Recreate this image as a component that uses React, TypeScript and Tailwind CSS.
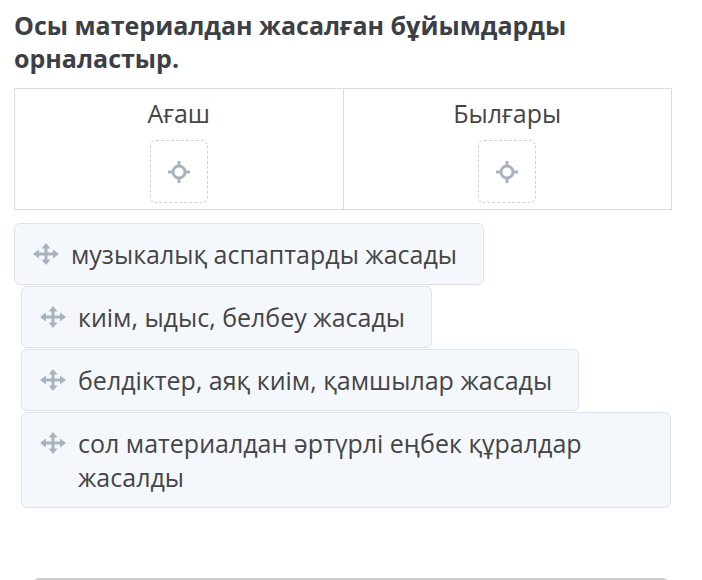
import React from "react";

const MoveIcon = () => (
    <svg width="26" height="22" viewBox="0 0 26 22" className="shrink-0">
        <g fill="#a9b3bd">
            <rect x="11.5" y="4" width="3" height="14" />
            <rect x="5" y="9.5" width="16" height="3" />
            <polygon points="13,0 8.5,5.5 17.5,5.5" />
            <polygon points="13,22 8.5,16.5 17.5,16.5" />
            <polygon points="0,11 6,6.5 6,15.5" />
            <polygon points="26,11 20,6.5 20,15.5" />
        </g>
    </svg>
);

const TargetIcon = () => (
    <svg width="24" height="24" viewBox="0 0 24 24">
        <g stroke="#a9b3bd" fill="none" strokeWidth="3">
            <circle cx="12" cy="12" r="6" />
            <line x1="12" y1="1" x2="12" y2="6" />
            <line x1="12" y1="18" x2="12" y2="23" />
            <line x1="1" y1="12" x2="6" y2="12" />
            <line x1="18" y1="12" x2="23" y2="12" />
        </g>
    </svg>
);

const Column = ({ title, last }: { title: string; last?: boolean }) => (
    <div className={`flex-1 flex flex-col items-center pt-[7px] pb-[6px] ${last ? "" : "border-r border-[#dcdcdc]"}`}>
        <div className="text-[25px] leading-[34px] text-[#454545]">{title}</div>
        <div className="mt-[10px] w-[58px] h-[63px] rounded-[6px] border border-dashed border-[#d2d2d2] flex items-center justify-center">
            <TargetIcon />
        </div>
    </div>
);

const Item = ({ text, shifted }: { text: string; shifted?: boolean }) => (
    <div
        className={`w-fit max-w-[650px] flex items-start gap-[12px] rounded-[6px] border border-[#dde3e8] bg-[#f4f8fc] pl-[18px] pr-[26px] py-[13px] ${shifted ? "ml-[7px]" : ""}`}
    >
        <div className="h-[34px] flex items-center">
            <MoveIcon />
        </div>
        <div className="text-[25px] leading-[34px] text-[#454545]">{text}</div>
    </div>
);

export default function App() {
    return (
        <div className="w-[702px] h-[580px] overflow-hidden bg-white px-[14px] pt-[9px]" style={{ fontFamily: '"Open Sans", "Noto Sans", sans-serif' }}>
            <h1 className="text-[25px] leading-[33px] font-bold text-[#3c3f45] pr-[100px]">
                Осы материалдан жасалған бұйымдарды орналастыр.
            </h1>
            <div className="mt-[13px] w-[658px] flex border border-[#dcdcdc]">
                <Column title="Ағаш" />
                <Column title="Былғары" last />
            </div>
            <div className="mt-[13px] flex flex-col gap-px">
                <Item text="музыкалық аспаптарды жасады" />
                <Item text="киім, ыдыс, белбеу жасады" shifted />
                <Item text="белдіктер, аяқ киім, қамшылар жасады" shifted />
                <Item text="сол материалдан әртүрлі еңбек құралдар жасалды" shifted />
            </div>
            <div className="mt-[70px] ml-[19px] w-[636px] h-[20px] rounded-t-[6px] border-t-2 border-[#cfcfcf]" />
        </div>
    );
}
